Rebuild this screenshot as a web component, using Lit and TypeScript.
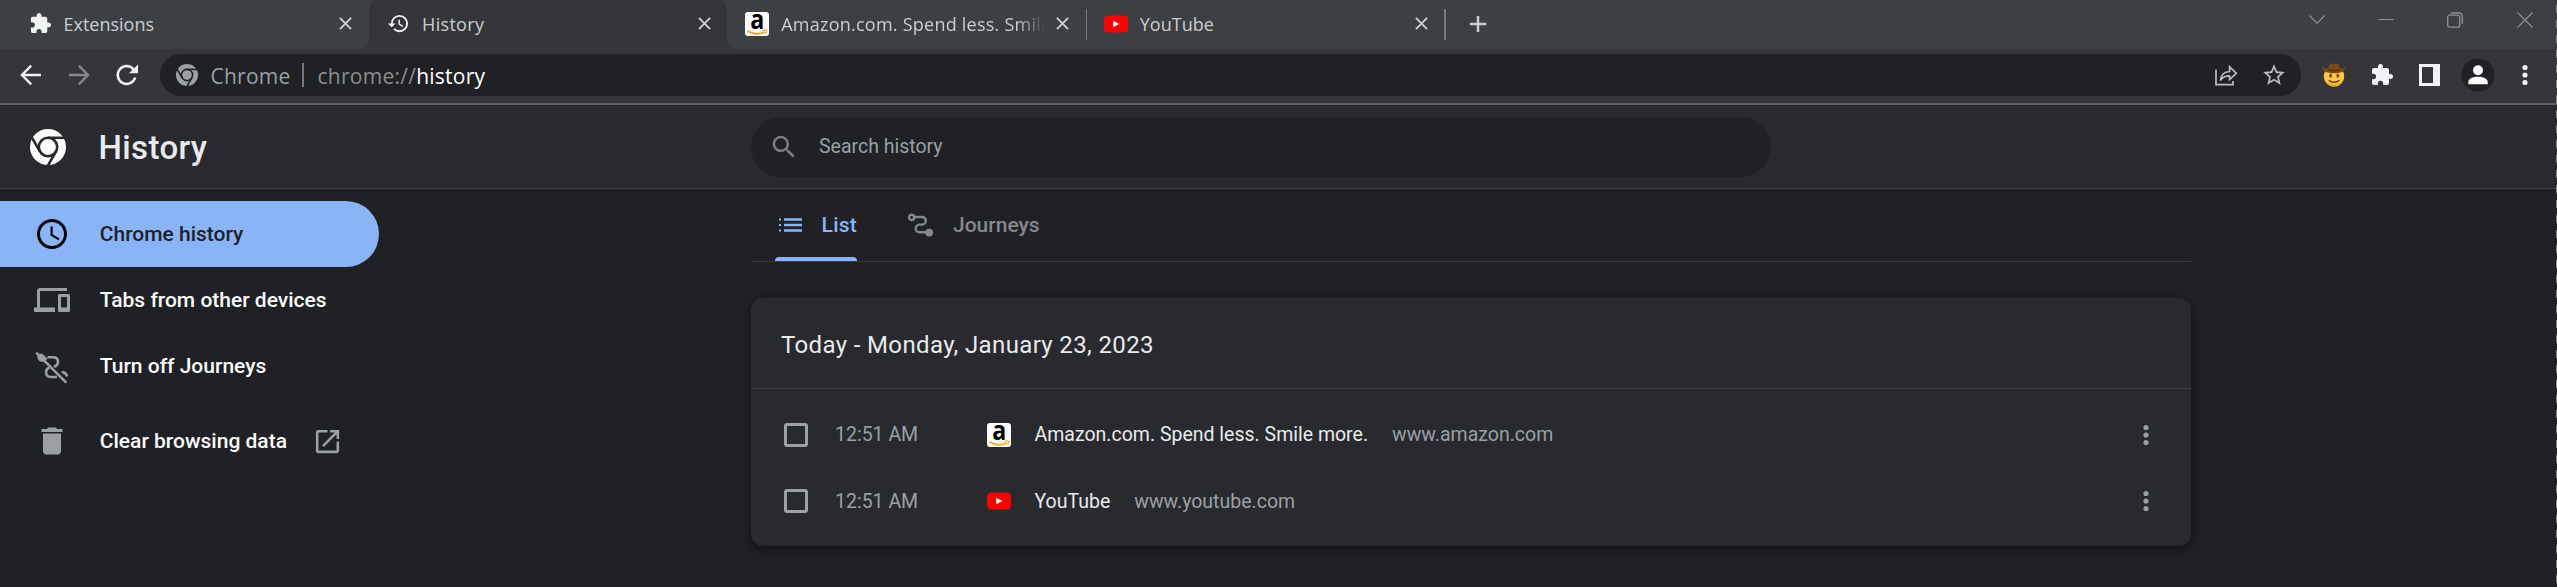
import { LitElement, html, css, svg } from "lit";
import { customElement, property } from "lit/decorators.js";

const EXT = "M20.5 11H19V7c0-1.1-.9-2-2-2h-4V3.5C13 2.12 11.88 1 10.5 1S8 2.12 8 3.5V5H4c-1.1 0-1.99.9-1.99 2v3.8H3.5c1.49 0 2.7 1.21 2.7 2.7s-1.21 2.7-2.7 2.7H2V20c0 1.1.9 2 2 2h3.8v-1.5c0-1.49 1.21-2.7 2.7-2.7 1.49 0 2.7 1.21 2.7 2.7V22H17c1.1 0 2-.9 2-2v-4h1.5c1.38 0 2.5-1.12 2.5-2.5S21.88 11 20.5 11z";

const chromeLogo = (bg: string) => svg`
  <circle cx="18" cy="18" r="18" fill="currentColor"/>
  <g fill="none" stroke=${bg} stroke-width="2.6">
    <circle cx="18" cy="18" r="9.2"/>
    <path d="M18 8.8H34.5"/>
    <path d="M18 8.8H34.5" transform="rotate(120 18 18)"/>
    <path d="M18 8.8H34.5" transform="rotate(240 18 18)"/>
  </g>`;

const art: Record<string, { box: string; body: unknown }> = {
  extension: { box: "0 0 24 24", body: svg`<path d=${EXT} fill="currentColor"/>` },
  history: { box: "0 0 24 24", body: svg`<path fill="currentColor" d="M13 3a9 9 0 0 0-9 9H1l3.89 3.89.07.14L9 12H6c0-3.87 3.13-7 7-7s7 3.13 7 7-3.13 7-7 7c-1.93 0-3.68-.79-4.94-2.06l-1.42 1.42A8.954 8.954 0 0 0 13 21a9 9 0 0 0 0-18zm-1 5v5l4.28 2.54.72-1.21-3.5-2.08V8H12z"/>` },
  search: { box: "0 0 24 24", body: svg`<path fill="currentColor" d="M15.5 14h-.79l-.28-.27C15.41 12.59 16 11.11 16 9.5 16 5.91 13.09 3 9.5 3S3 5.91 3 9.5 5.91 16 9.5 16c1.61 0 3.09-.59 4.23-1.57l.27.28v.79l5 4.99L20.49 19l-4.99-5zm-6 0C7.01 14 5 11.99 5 9.5S7.01 5 9.5 5 14 7.01 14 9.5 11.99 14 9.5 14z"/>` },
  clock: { box: "0 0 24 24", body: svg`<path fill="currentColor" d="M11.99 2C6.47 2 2 6.48 2 12s4.47 10 9.99 10C17.52 22 22 17.52 22 12S17.52 2 11.99 2zM12 20c-4.42 0-8-3.58-8-8s3.58-8 8-8 8 3.58 8 8-3.58 8-8 8zm.5-13H11v6l5.25 3.15.75-1.23-4.5-2.67z"/>` },
  devices: { box: "0 0 24 24", body: svg`<path fill="currentColor" d="M4 6h18V4H4c-1.1 0-2 .9-2 2v11H0v3h14v-3H4V6zm19 2h-6c-.55 0-1 .45-1 1v10c0 .55.45 1 1 1h6c.55 0 1-.45 1-1V9c0-.55-.45-1-1-1zm-1 9h-4v-7h4v7z"/>` },
  trash: { box: "0 0 24 24", body: svg`<path fill="currentColor" d="M6 19c0 1.1.9 2 2 2h8c1.1 0 2-.9 2-2V7H6v12zM19 4h-3.5l-1-1h-5l-1 1H5v2h14V4z"/>` },
  launch: { box: "0 0 24 24", body: svg`<path fill="currentColor" d="M19 19H5V5h7V3H5a2 2 0 0 0-2 2v14a2 2 0 0 0 2 2h14c1.1 0 2-.9 2-2v-7h-2v7zM14 3v2h3.59l-9.83 9.83 1.41 1.41L19 6.41V10h2V3h-7z"/>` },
  star: { box: "0 0 24 24", body: svg`<path fill="currentColor" d="M22 9.24l-7.19-.62L12 2 9.19 8.63 2 9.24l5.46 4.73L5.82 21 12 17.27 18.18 21l-1.63-7.03L22 9.24zM12 15.4l-3.76 2.27 1-4.28-3.32-2.88 4.38-.38L12 6.1l1.71 4.04 4.38.38-3.32 2.88 1 4.28L12 15.4z"/>` },
  journeysOff: { box: "0 0 36 36", body: svg`<g fill="none" stroke="currentColor" stroke-width="2.6">
      <path d="M13.5 9.3H19c6.4 0 6.6 8.2.8 9.4M15.6 19.8c-5 1-4.6 9.2.9 9.2H23M27.8 24.6c2.3-.8 4.6.9 5.2 4"/><path d="M2.2 4.7 32.2 34.6"/></g>
      <path d="M3.4 6.6 8 5.6l5.6 5.2-3 2.8C6.6 15 3 12 3.4 8z" fill="currentColor"/>` },
  journeys: { box: "0 0 28 26", body: svg`<g fill="none" stroke="currentColor" stroke-width="2.4"><circle cx="4.6" cy="5.4" r="2.6"/><path d="M7.5 5H15a3.7 3.7 0 0 1 0 7.6h-2.5a3.85 3.85 0 0 0 0 7.7H22"/></g><circle cx="22.2" cy="20.6" r="3.9" fill="currentColor"/>` },
  list: { box: "0 0 24 16", body: svg`<path fill="currentColor" d="M1 1.5h2v2H1zM6 1.3h18v2.5H6zM1 7h2v2H1zM6 6.8h18v2.5H6zM1 12.5h2v2H1zM6 12.2h18v2.5H6z"/>` },
  back: { box: "0 0 24 24", body: svg`<path fill="none" stroke="currentColor" stroke-width="2.4" d="M22 12H4M12.2 2.7 3 12l9.2 9.3"/>` },
  forward: { box: "0 0 24 24", body: svg`<path fill="none" stroke="currentColor" stroke-width="2.4" d="M2 12H20M11.8 2.7 21 12l-9.2 9.3"/>` },
  reload: { box: "0 0 24 24", body: svg`<path fill="none" stroke="currentColor" stroke-width="2.5" d="M20.2 14.5A8.9 8.9 0 1 1 18.6 6.4"/><path fill="currentColor" d="M23 1.5V10.3H14z"/>` },
  close: { box: "0 0 14 14", body: svg`<path stroke="currentColor" stroke-width="2.1" d="M1 1 13 13M13 1 1 13"/>` },
  plus: { box: "0 0 20 20", body: svg`<path stroke="currentColor" stroke-width="2.8" d="M1 10H19M10 1V19"/>` },
  dots: { box: "0 0 6 22", body: svg`<g fill="currentColor"><circle cx="3" cy="3.5" r="2.6"/><circle cx="3" cy="11" r="2.6"/><circle cx="3" cy="18.5" r="2.6"/></g>` },
  share: { box: "0 0 24 24", body: svg`<g fill="none" stroke="currentColor" stroke-width="1.7"><path d="M2 6.5V21.7H19V18"/><path d="M6.3 17.5C7 11.5 10.5 8.8 15.6 8.5V3.8L22.3 10.2 15.6 16.5V12.8C11.5 12.8 8.5 14 6.3 17.5z"/></g>` },
  panel: { box: "0 0 21 22", body: svg`<path fill="#f1f3f4" fill-rule="evenodd" d="M0 0H21V22H0zM3 3V19H14V3z"/>` },
  avatar: { box: "0 0 34 34", body: svg`<circle cx="17" cy="17" r="16.5" fill="#202124"/><circle cx="17" cy="12.3" r="5" fill="#fff"/><path fill="#fff" d="M7.3 26.3V24c0-3.5 5-5.3 9.7-5.3s9.7 1.8 9.7 5.3v2.3z"/>` },
  cowboy: { box: "0 0 26 26", body: svg`<circle cx="13" cy="14.5" r="10.2" fill="#fcc840"/><path d="M4 18.5a10.2 10.2 0 0 0 18 0c-4 4.5-14 4.5-18 0z" fill="#f2a62b"/><path d="M1 4.5C2.5 6.5 5 7 7.5 6.3L8.3 2.5C9.3 1 11 1.2 13 2 15 1.2 16.7 1 17.7 2.5L18.5 6.3C21 7 23.5 6.5 25 4.5 25 8.5 21 11.3 13 11.3S1 8.5 1 4.5z" fill="#7a4a17"/><path d="M7.5 6.3c3.5 2 7.5 2 11 0l.3 1.7c-3.5 1.7-8.2 1.7-11.6 0z" fill="#57330d"/><ellipse cx="9.6" cy="13.7" rx="1.3" ry="1.9" fill="#5f3d12"/><ellipse cx="16.8" cy="13.7" rx="1.3" ry="1.9" fill="#5f3d12"/><path d="M8.2 18.4c2.5 2.5 7.2 2.5 9.8 0" fill="none" stroke="#5f3d12" stroke-width="1.4" stroke-linecap="round"/>` },
  amazon: { box: "0 0 24 24", body: svg`<rect width="24" height="24" rx="3" fill="#fff"/><text transform="translate(5.2 16.8) scale(.86 1)" font-family="Open Sans, sans-serif" font-weight="700" font-size="27" fill="#000">a</text><path d="M2.5 18.7c5.5 4 13 4 17.3 1" fill="none" stroke="#f5a623" stroke-width="1.7"/><path d="M17.7 18.5c1.5-.6 3.6-.6 4 0 .2.8-.6 2.7-1.5 3.3" fill="none" stroke="#f5a623" stroke-width="1.2"/>` },
  youtube: { box: "0 0 24 24", body: svg`<rect y="3.6" width="24" height="16.8" rx="4.2" fill="#f00"/><path d="M9.2 8.7v6.6l6.2-3.3z" fill="#fff"/>` },
  caret: { box: "0 0 16 16", body: svg`<path d="M.5 3.5 8 11.3 15.5 3.5" fill="none" stroke="currentColor" stroke-width="1.2"/>` },
  minimize: { box: "0 0 16 16", body: svg`<path d="M.5 7.5H15.5" stroke="currentColor"/>` },
  restore: { box: "0 0 16 16", body: svg`<g fill="none" stroke="currentColor" stroke-width="1.3"><rect x=".7" y="3.2" width="12" height="12" rx="2"/><path d="M3.7 1h8.1c2 0 3.5 1.5 3.5 3.5v7.2"/></g>` },
  exit: { box: "0 0 16 16", body: svg`<path d="M.5.5 15.5 15.5M15.5.5.5 15.5" stroke="currentColor" stroke-width="1.2"/>` },
  chromeGrey: { box: "0 0 36 36", body: chromeLogo("#202124") },
  chromeWhite: { box: "0 0 36 36", body: chromeLogo("#292a2d") },
};

@customElement("ui-icon")
class UiIcon extends LitElement {
  @property() name = "";
  static styles = css`
    :host { display: block; flex: none; }
    svg { display: block; width: 100%; height: 100%; overflow: visible; }
  `;
  render() {
    const a = art[this.name];
    return a ? html`<svg viewBox=${a.box}>${a.body}</svg>` : null;
  }
}

@customElement("tab-strip")
class TabStrip extends LitElement {
  static styles = css`
    :host { display: flex; height: 49px; padding-left: 10px; background: #3c4043; color: #cbcdcf;
      font: 18px "Open Sans", sans-serif; box-sizing: border-box; }
    .tab { position: relative; box-sizing: border-box; width: 358.6px; height: 49px; display: flex; align-items: center;
      padding: 0 16.4px 2px 18px; }
    .fav { width: 24px; height: 24px; margin-right: 12px; }
    .fav.small { width: 23px; height: 23px; margin: 0 12px 0 .5px; color: #f1f3f4; }
    .title { flex: 1; overflow: hidden; white-space: nowrap; line-height: 28px; }
    .wide { letter-spacing: .3px; }
    .fade { letter-spacing: .24px; margin-right: 10px;
      -webkit-mask-image: linear-gradient(90deg, #000 236px, transparent 264px);
      mask-image: linear-gradient(90deg, #000 236px, transparent 264px); }
    .x { width: 13px; height: 13px; }
    .active { background: #35363a; border-radius: 9px 9px 0 0; }
    .active::before, .active::after { content: ""; position: absolute; bottom: 0; width: 12px; height: 12px; }
    .active::before { left: -12px; background: radial-gradient(circle at 0 0, transparent 11.5px, #35363a 12px); }
    .active::after { right: -12px; background: radial-gradient(circle at 100% 0, transparent 11.5px, #35363a 12px); }
    .sep { align-self: flex-start; width: 1.5px; height: 31px; margin: 9px -1.5px 0 0; background: #76797c; }
    .plus { width: 18px; height: 18px; margin: 15px 0 0 24.5px; }
    .win { margin-left: auto; display: flex; gap: 53.2px; padding: 12px 24.5px 0 0; color: #8f9193; }
    .win ui-icon { width: 16px; height: 16px; }
  `;
  render() {
    return html`
      <div class="tab"><ui-icon class="fav small" name="extension"></ui-icon><span class="title">Extensions</span><ui-icon class="x" name="close"></ui-icon></div>
      <div class="tab active"><ui-icon class="fav small" name="history"></ui-icon><span class="title wide">History</span><ui-icon class="x" name="close"></ui-icon></div>
      <div class="tab"><ui-icon class="fav" name="amazon"></ui-icon><span class="title fade">Amazon.com. Spend less. Smile more.</span><ui-icon class="x" name="close"></ui-icon></div>
      <div class="sep"></div>
      <div class="tab"><ui-icon class="fav" name="youtube"></ui-icon><span class="title">YouTube</span><ui-icon class="x" name="close"></ui-icon></div>
      <div class="sep"></div>
      <ui-icon class="plus" name="plus"></ui-icon>
      <div class="win"><ui-icon name="caret"></ui-icon><ui-icon name="minimize"></ui-icon><ui-icon name="restore"></ui-icon><ui-icon name="exit"></ui-icon></div>`;
  }
}

@customElement("tool-bar")
class ToolBar extends LitElement {
  static styles = css`
    :host { display: flex; align-items: center; height: 56px; box-sizing: border-box; padding: 0 28.7px 2px 19px;
      background: #35363a; border-bottom: 2px solid #5f6063; color: #f1f3f4; }
    .nav { width: 24px; height: 24px; margin-right: 24px; }
    .nav.off { color: #87888b; }
    .nav.re { margin-right: 21px; }
    .omni { flex: 1; height: 42px; border-radius: 21px; background: #202124; display: flex; align-items: center;
      color: #9aa0a6; font: 21px "Open Sans", sans-serif; letter-spacing: .25px; padding: 0 14.3px 0 16px; box-sizing: border-box; white-space: nowrap; }
    .logo { width: 22px; height: 22px; margin-right: 12.5px; }
    .label, .url { padding-top: 1.5px; }
    .bar { width: 2px; height: 24px; margin: 0 14px 0 11px; background: #76787b; }
    .url { color: #8c8e91; }
    .url b { color: #fff; font-weight: 400; }
    .share { width: 24px; height: 24px; margin-left: auto; color: #b9bbbd; }
    .star { width: 26px; height: 26px; margin-left: 23px; color: #b9bbbd; }
    .acts { display: flex; align-items: center; }
    .cow { width: 26px; height: 26px; margin-left: 20px; }
    .ext { width: 24px; height: 24px; margin-left: 23px; }
    .panel { width: 21px; height: 22px; margin-left: 25px; }
    .ava { width: 34px; height: 34px; margin-left: 20.5px; }
    .dots { width: 6px; height: 22px; margin-left: 27.8px; }
  `;
  render() {
    return html`
      <ui-icon class="nav" name="back"></ui-icon><ui-icon class="nav off" name="forward"></ui-icon><ui-icon class="nav re" name="reload"></ui-icon>
      <div class="omni"><ui-icon class="logo" name="chromeGrey"></ui-icon><span class="label">Chrome</span><span class="bar"></span>
        <span class="url">chrome://<b>history</b></span>
        <ui-icon class="share" name="share"></ui-icon><ui-icon class="star" name="star"></ui-icon></div>
      <div class="acts"><ui-icon class="cow" name="cowboy"></ui-icon><ui-icon class="ext" name="extension"></ui-icon><ui-icon class="panel" name="panel"></ui-icon><ui-icon class="ava" name="avatar"></ui-icon><ui-icon class="dots" name="dots"></ui-icon></div>`;
  }
}

@customElement("history-page")
class HistoryPage extends LitElement {
  static styles = css`
    :host { display: block; font: 19.5px Roboto, sans-serif; color: #e8eaed; }
    .head { display: flex; align-items: center; height: 84px; box-sizing: border-box; padding-left: 30px; background: #292a2d; border-bottom: 1px solid #3f4043; }
    .logo { width: 36px; height: 36px; color: #fff; }
    h1 { font-size: 33px; font-weight: 500; letter-spacing: .35px; margin: 0 0 0 32.6px; padding-top: 1px; width: 652.4px; }
    .search { width: 1020px; height: 60px; border-radius: 30px; background: #202124; display: flex; align-items: center; box-sizing: border-box; padding-left: 18px; color: #9aa0a6; }
    .search ui-icon { width: 30px; height: 30px; margin-right: 20px; color: #7c7e81; }
    .cols { display: grid; grid-template-columns: 751px 1440px; }
    nav { padding-top: 12px; color: #fff; font-weight: 500; font-size: 21px; }
    .item { display: flex; align-items: center; height: 66px; width: 379px; box-sizing: border-box; padding-left: 34px; }
    .item .ic { width: 36px; height: 36px; margin-right: 29.8px; color: #9aa0a6; }
    .sel { background: #8ab4f8; color: #202124; border-radius: 0 33px 33px 0; }
    .sel .ic { color: #000; }
    .clear { margin-top: 9px; }
    .ext { width: 31px; height: 31px; margin-left: 25.5px; color: #9aa0a6; }
    .tabs { display: flex; height: 73px; box-sizing: border-box; border-bottom: 1px solid #3b3c3f; padding-left: 24px; gap: 48px; font-weight: 500; font-size: 21px; color: #85888c; }
    .t { display: flex; align-items: center; height: 72px; box-sizing: border-box; position: relative; }
    .t.on { color: #8ab4f8; width: 82px; letter-spacing: .2px; }
    .t.on::after { content: ""; position: absolute; left: 0; right: 0; bottom: 0; height: 4px; border-radius: 4px 4px 0 0; background: #8ab4f8; }
    .li { width: 24px; height: 16px; margin: 0 19.6px 0 3px; }
    .jo { width: 28px; height: 26px; margin: 0 18.5px 0 1.5px; }
    .card { margin-top: 36px; height: 248px; border-radius: 12px; background: #292a2d; box-shadow: 0 2px 6px rgba(0,0,0,.3), 0 3px 9px 3px rgba(0,0,0,.15); }
    .date { height: 91px; box-sizing: border-box; border-bottom: 1px solid #414245; padding: 3.5px 0 0 30px; display: flex; align-items: center; font-size: 24px; letter-spacing: .36px; }
    .rows { padding-top: 12.3px; }
    .row { height: 66.5px; display: flex; align-items: center; padding: 0 42px 0 33px; color: #9aa0a6; }
    .box { width: 24px; height: 24px; box-sizing: border-box; border: 3px solid #9aa0a6; border-radius: 3px; margin-right: 27px; }
    .time { width: 152px; }
    .fav { width: 24px; height: 24px; margin-right: 23.5px; }
    .name { color: #e8eaed; margin-right: 24px; }
    .dots { width: 6px; height: 22px; margin-left: auto; }
  `;
  row(icon: string, name: string, site: string) {
    return html`<div class="row"><span class="box"></span><span class="time">12:51 AM</span><ui-icon class="fav" name=${icon}></ui-icon><span class="name">${name}</span><span>${site}</span><ui-icon class="dots" name="dots"></ui-icon></div>`;
  }
  render() {
    return html`
      <div class="head"><ui-icon class="logo" name="chromeWhite"></ui-icon><h1>History</h1>
        <div class="search"><ui-icon name="search"></ui-icon><span>Search history</span></div></div>
      <div class="cols">
        <nav>
          <div class="item sel"><ui-icon class="ic" name="clock"></ui-icon><span>Chrome history</span></div>
          <div class="item"><ui-icon class="ic" name="devices"></ui-icon><span>Tabs from other devices</span></div>
          <div class="item"><ui-icon class="ic" name="journeysOff"></ui-icon><span>Turn off Journeys</span></div>
          <div class="item clear"><ui-icon class="ic" name="trash"></ui-icon><span>Clear browsing data</span><ui-icon class="ext" name="launch"></ui-icon></div>
        </nav>
        <main>
          <div class="tabs"><div class="t on"><ui-icon class="li" name="list"></ui-icon><span>List</span></div><div class="t"><ui-icon class="jo" name="journeys"></ui-icon><span>Journeys</span></div></div>
          <div class="card"><div class="date">Today - Monday, January 23, 2023</div>
            <div class="rows">${this.row("amazon", "Amazon.com. Spend less. Smile more.", "www.amazon.com")}${this.row("youtube", "YouTube", "www.youtube.com")}</div></div>
        </main>
      </div>`;
  }
}

@customElement("app-root")
class AppRoot extends LitElement {
  static styles = css`
    :host { display: block; position: relative; height: 587px; overflow: hidden; background: #202124; }
    .edge { position: absolute; top: 0; right: 0; bottom: 0; width: 1px; background: repeating-linear-gradient(180deg, transparent 0 5px, #85878a 5px 13px, transparent 13px 15px); }
  `;
  render() {
    return html`<tab-strip></tab-strip><tool-bar></tool-bar><history-page></history-page><div class="edge"></div>`;
  }
}
